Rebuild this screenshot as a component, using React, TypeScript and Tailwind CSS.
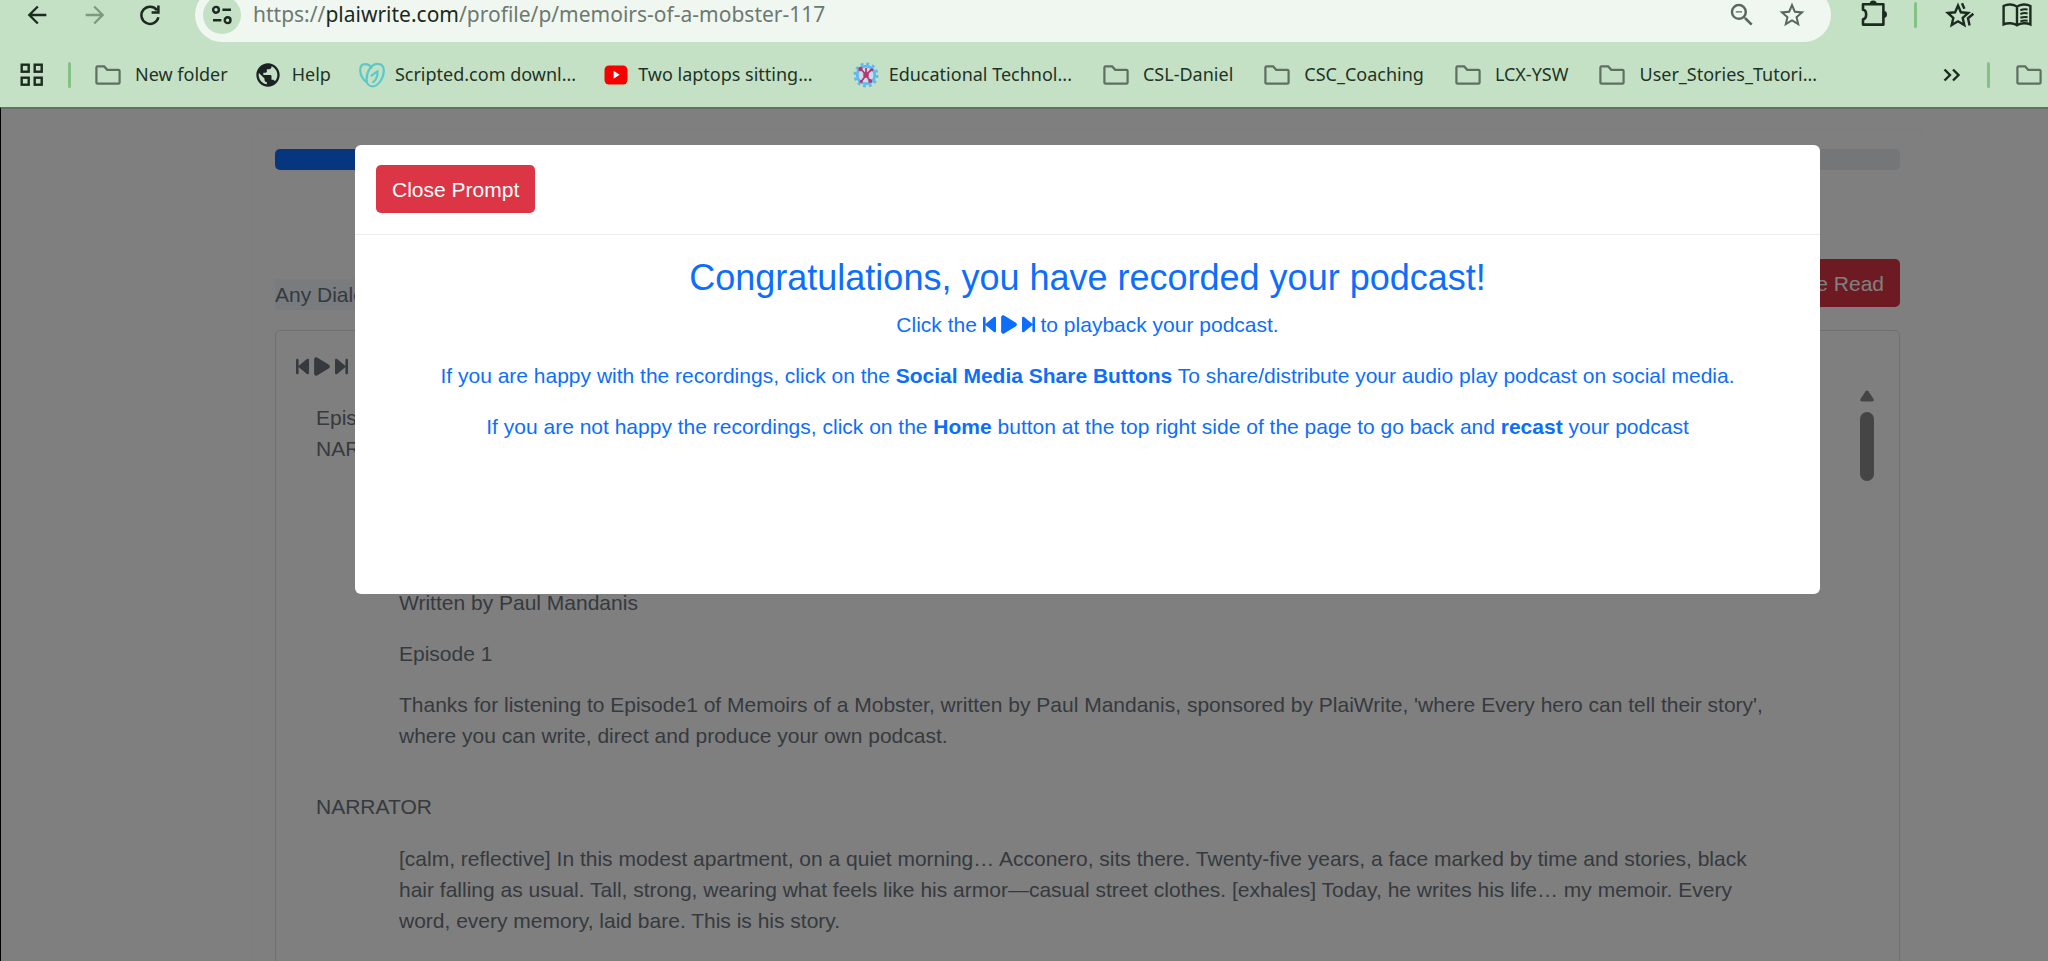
import React from "react";
import { FaBackwardStep, FaForwardStep, FaPlay } from "react-icons/fa6";
import { MdArrowBack, MdArrowForward, MdPublic, MdStarBorder, MdZoomOut } from "react-icons/md";

function FolderIcon() {
  return (
    <svg viewBox="0 0 26 20" className="w-[26px] h-5 shrink-0" fill="none" stroke="#5f6f62" strokeWidth="2.2">
      <path d="M2.6 1.4h6.6l3 3.4h11.2q1.2 0 1.2 1.2v11.4q0 1.2-1.2 1.2H2.6q-1.2 0-1.2-1.2V2.6q0-1.2 1.2-1.2z" />
    </svg>
  );
}

function AppsIcon() {
  return (
    <svg viewBox="0 0 24 24" className="w-6 h-6" fill="none" stroke="#1c2a20" strokeWidth="2.4">
      <rect x="1.7" y="1.7" width="7" height="7" />
      <rect x="14.7" y="1.7" width="7" height="7" />
      <rect x="1.7" y="14.7" width="7" height="7" />
      <rect x="14.7" y="14.7" width="7" height="7" />
    </svg>
  );
}

function ReloadIcon() {
  return (
    <svg viewBox="0 0 22 22" className="w-[22px] h-[22px]" fill="none" stroke="#1c2a20" strokeWidth="2.5">
      <path d="M19.4 13.2A8.6 8.6 0 1 1 18 6.2" />
      <path d="M19.4 1.6v6.8h-6.8" />
    </svg>
  );
}

function SiteInfoIcon() {
  return (
    <svg viewBox="0 0 22 20" className="w-[22px] h-5" fill="none" stroke="#1c2a20" strokeWidth="2.4">
      <circle cx="5" cy="4.8" r="2.9" />
      <path d="M11.4 4.8h8.6M2 15.2h8.4" />
      <circle cx="16.6" cy="15.2" r="2.9" />
    </svg>
  );
}

function PuzzleIcon() {
  return (
    <svg viewBox="0 0 32 32" className="w-8 h-8" fill="none" stroke="#1c2a20" strokeWidth="2.6" strokeLinejoin="round">
      <path d="M3 5.2h20.4v20.4H3v-5.4c4.2-.6 4.2-8.8 0-9.4z" />
      <path d="M9.6 5a3.6 3.6 0 0 1 7.2 0zM23.6 12a3.4 3.4 0 0 1 0 6.8z" fill="#1c2a20" stroke="none" />
    </svg>
  );
}

function FavoritesIcon() {
  return (
    <svg viewBox="0 0 30 28" className="w-[30px] h-7" fill="none" stroke="#1c2a20" strokeWidth="2.4">
      <path d="M13 4.6l2.9 6.7 7.3.7-5.5 4.9 1.6 7.2-6.3-3.8-6.3 3.8 1.6-7.2L2.8 12l7.3-.7z" />
      <path d="M17 2.2l2.4 5.6M28.4 12.8l-5.4 4.4 1.6 7.4" />
    </svg>
  );
}

function ReadingListIcon() {
  return (
    <svg viewBox="0 0 32 26" className="w-8 h-[26px]" fill="none" stroke="#1c2a20" strokeWidth="2.4">
      <path d="M16 4.6C12.4 2 6.4 1.8 2.6 4v18.4c4-1.8 9.8-1.6 13.4.8 3.6-2.4 9.4-2.6 13.4-.8V4C25.6 1.8 19.6 2 16 4.6zM16 4.6v18.6" />
      <path d="M19.4 8.2q3.6-1.4 7.2-.6M19.4 12q3.6-1.4 7.2-.6M19.4 15.800q3.6-1.4 7.2-.6M19.4 19.4q3.6-1.4 7.2-.6" strokeWidth="2" />
    </svg>
  );
}

function ScriptedIcon() {
  return (
    <svg viewBox="0 0 26 26" className="w-[26px] h-[26px]" fill="none" stroke="#5cc9c9" strokeWidth="2.2" strokeLinecap="round" strokeLinejoin="round">
      <path d="M8 20.4C3.8 17.4 1.2 12.8 1.2 8.2c0-3.8 2-6 4.8-6 2.8 0 5 1.2 6.4 3.6" />
      <path d="M18.4 1.8c4 0 6.4 2.6 6.4 6.6 0 7.6-5.4 16-11.4 16-3.6 0-5.8-3-5.8-7C7.6 10 12 1.8 18.4 1.8z" />
      <path d="M12.6 13.6l6-4.4c0 4.6-1.4 8.8-4.4 11" />
    </svg>
  );
}

function YoutubeIcon() {
  return (
    <svg viewBox="0 0 24 20" className="w-6 h-5">
      <rect x="0.5" y="0.5" width="23" height="19" rx="4.5" fill="#f70000" />
      <path d="M9.6 5.8v8l6-4z" fill="#fff" />
    </svg>
  );
}

function EducationIcon() {
  return (
    <svg viewBox="0 0 26 26" className="w-[26px] h-[26px]" fill="none">
      <circle cx="13" cy="13" r="11.2" stroke="#5fb8ee" strokeWidth="2.6" strokeDasharray="2.93 2.93" />
      <circle cx="13" cy="13" r="8.8" fill="#c9dcec" stroke="#5fb8ee" strokeWidth="2.8" />
      <path d="M7.5 6.5L13 13l5.5-5.5M13 13l-5 7M13 13l4.5 6.5M13 6v7" stroke="#b2386f" strokeWidth="1.8" />
      <circle cx="13" cy="13" r="2.8" fill="#b2386f" />
      <circle cx="7.5" cy="7" r="2.2" fill="#b2386f" />
      <circle cx="18.8" cy="7.8" r="1.5" fill="#b2386f" />
      <circle cx="8" cy="19.5" r="1.5" fill="#b2386f" />
      <circle cx="17.2" cy="19" r="2" fill="#b2386f" />
    </svg>
  );
}

function Playback() {
  return (
    <span className="inline-flex items-center gap-[5px] align-[-3px]">
      <FaBackwardStep className="w-[13px] h-[21px]" />
      <FaPlay className="w-4 h-[21px]" />
      <FaForwardStep className="w-[13px] h-[21px]" />
    </span>
  );
}

function Divider() {
  return <span className="w-[3px] h-[26px] rounded-full bg-[#84c186]" />;
}

const bookmarks = [
  { label: "New folder", icon: <FolderIcon />, spacing: "gap-3.5 mr-7" },
  { label: "Help", icon: <MdPublic className="w-7 h-7 -mx-0.5 text-[#1c2224]" />, spacing: "gap-3 mr-7" },
  { label: "Scripted.com downl...", icon: <ScriptedIcon />, spacing: "gap-2.5 mr-7" },
  { label: "Two laptops sitting...", icon: <YoutubeIcon />, spacing: "gap-2.5 mr-10" },
  { label: "Educational Technol...", icon: <EducationIcon />, spacing: "gap-2.5 mr-[31px]" },
  { label: "CSL-Daniel", icon: <FolderIcon />, spacing: "gap-3.5 mr-[31px]" },
  { label: "CSC_Coaching", icon: <FolderIcon />, spacing: "gap-3.5 mr-[31px]" },
  { label: "LCX-YSW", icon: <FolderIcon />, spacing: "gap-3.5 mr-[31px]" },
  { label: "User_Stories_Tutori...", icon: <FolderIcon />, spacing: "gap-3.5" },
];

function Browser() {
  return (
    <header className="shrink-0 overflow-hidden bg-[#c5e1c5] font-['Noto_Sans','Open_Sans',sans-serif] text-[#1f3326]">
      <div className="-mt-3 h-[54px] flex items-center">
        <div className="w-[195px] shrink-0 flex items-center gap-[30px] pl-[23px]">
          <button aria-label="Back"><MdArrowBack className="w-7 h-7 text-[#1c2a20]" /></button>
          <button aria-label="Forward"><MdArrowForward className="w-7 h-7 text-[#7f9882]" /></button>
          <button aria-label="Reload"><ReloadIcon /></button>
        </div>
        <div className="flex-1 h-full flex items-center rounded-full bg-[#f0f7f0] pl-2 pr-6">
          <button aria-label="Site information" className="w-[38px] h-[38px] flex items-center justify-center rounded-full bg-[#c5e1c5]">
            <SiteInfoIcon />
          </button>
          <a href="#" className="flex-1 pl-3 text-[21px] text-[#6d7970]">
            https://<span className="text-[#1c2a20]">plaiwrite.com</span>/profile/p/memoirs-of-a-mobster-117
          </a>
          <button aria-label="Zoom out"><MdZoomOut className="w-[30px] h-[30px] text-[#59685d]" /></button>
          <button aria-label="Bookmark this page" className="ml-5"><MdStarBorder className="w-[30px] h-[30px] text-[#59685d]" /></button>
        </div>
        <div className="w-[217px] shrink-0 flex items-center pl-[29px]">
          <button aria-label="Extensions"><PuzzleIcon /></button>
          <span className="ml-[22px] flex"><Divider /></span>
          <button aria-label="Favorites" className="ml-7"><FavoritesIcon /></button>
          <button aria-label="Reading list" className="ml-[26px]"><ReadingListIcon /></button>
        </div>
      </div>
      <nav className="h-[65px] flex items-center pl-5 pr-1.5 text-[18px]">
        <button aria-label="Apps"><AppsIcon /></button>
        <span className="mx-6 flex"><Divider /></span>
        <div className="flex-1 flex items-center">
          {bookmarks.map((item) => (
            <a key={item.label} href="#" className={"flex items-center whitespace-nowrap " + item.spacing}>
              {item.icon}
              {item.label}
            </a>
          ))}
        </div>
        <button aria-label="More bookmarks">
          <svg viewBox="0 0 18 14" className="w-[18px] h-3.5" fill="none" stroke="#1c2a20" strokeWidth="2.4">
            <path d="M1.5 1.5L7 7l-5.5 5.5M10 1.5L15.500 7 10 12.5" />
          </svg>
        </button>
        <span className="mx-[26px] flex"><Divider /></span>
        <FolderIcon />
      </nav>
    </header>
  );
}

function ScriptPage() {
  return (
    <div className="min-h-full ml-[251px] mr-[125px] mt-5 px-[22px] pt-[19px] border-x border-t border-[#fafafa] text-[#6c757d]">
      <div className="h-[21px] rounded-[5px] bg-[#e9ecef] overflow-hidden">
        <div className="w-1/4 h-full bg-[#0d6efd]" />
      </div>
      <div className="mt-[89px] flex items-start justify-between">
        <p className="mt-5 bg-[#f0f8ff]">Any Dialogue</p>
        <button className="h-12 px-4 rounded-[5px] bg-[#dc3545] text-white">Close Read</button>
      </div>
      <section className="mt-5 pt-5 pl-5 pr-[25px] border border-[#dfdfdf] rounded-[5px] h-[800px]">
        <Playback />
        <div className="flex">
          <div className="flex-1 pl-5 pt-5">
            <p>Episode 1</p>
            <p>NARRATOR</p>
            <div className="pl-[83px] pr-20 pt-[123px] space-y-5">
              <p>Written by Paul Mandanis</p>
              <p>Episode 1</p>
              <p>
                Thanks for listening to Episode1 of Memoirs of a Mobster, written by Paul Mandanis, sponsored by
                PlaiWrite, 'where Every hero can tell their story', where you can write, direct and produce your own
                podcast.
              </p>
            </div>
            <p className="mt-10">NARRATOR</p>
            <div className="pl-[83px] pr-20 pt-[21px]">
              <p>
                [calm, reflective] In this modest apartment, on a quiet morning… Acconero, sits there. Twenty-five
                years, a face marked by time and stories, black hair falling as usual. Tall, strong, wearing what
                feels like his armor—casual street clothes. [exhales] Today, he writes his life… my memoir. Every
                word, every memory, laid bare. This is his story.
              </p>
            </div>
          </div>
          <div className="w-3.5 pt-2 flex flex-col items-center gap-[10px]">
            <svg viewBox="0 0 14 12" className="w-3.5 h-3" fill="#8b8b8b">
              <path d="M5.6 1.2q1.4-1.6 2.8 0l5 7.6q1.2 2.4-1.2 2.6H1.8Q-.6 11.2.6 8.8z" />
            </svg>
            <div className="w-3.5 h-[69px] rounded-full bg-[#8b8b8b]" />
          </div>
        </div>
      </section>
    </div>
  );
}

function PromptModal() {
  return (
    <div className="absolute inset-0 bg-black/50 pt-9 pl-[354px] pr-[228px]">
      <div role="dialog" className="h-[449px] rounded-[6px] bg-white">
        <div className="px-[21px] pt-5 pb-[21px] border-b border-[#ececec]">
          <button className="h-12 px-4 rounded-[5px] bg-[#dc3545] text-white">Close Prompt</button>
        </div>
        <div className="p-[21px] text-center text-[#0d6efd]">
          <h3 className="mb-2.5 text-[36px] leading-[43px]">Congratulations, you have recorded your podcast!</h3>
          <p className="mb-5">
            Click the <Playback /> to playback your podcast.
          </p>
          <p className="mb-5">
            If you are happy with the recordings, click on the <b>Social Media Share Buttons</b> To share/distribute
            your audio play podcast on social media.
          </p>
          <p>
            If you are not happy the recordings, click on the <b>Home</b> button at the top right side of the page to
            go back and <b>recast</b> your podcast
          </p>
        </div>
      </div>
    </div>
  );
}

export default function App() {
  return (
    <div className="h-screen flex flex-col overflow-hidden bg-white">
      <Browser />
      <main className="relative flex-1 min-h-0 overflow-hidden border-l border-l-black border-t-2 border-t-[#627065] font-['Liberation_Sans',Arial,sans-serif] text-[21px] leading-[31px]">
        <ScriptPage />
        <PromptModal />
      </main>
    </div>
  );
}
